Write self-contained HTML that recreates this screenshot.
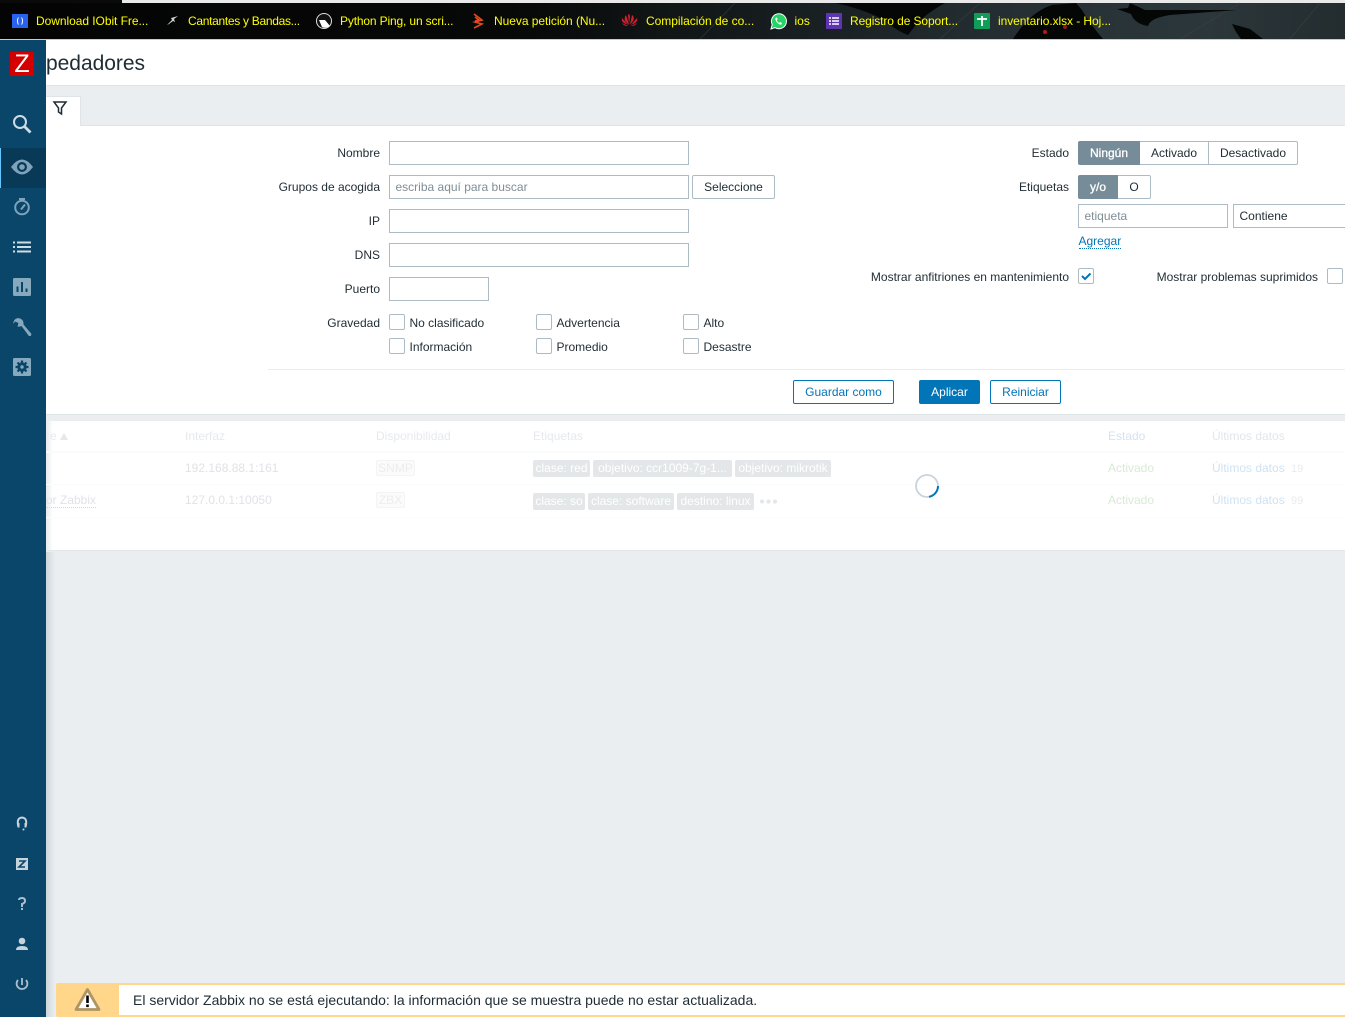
<!DOCTYPE html>
<html><head><meta charset="utf-8"><style>
html,body{margin:0;padding:0}
body{width:1345px;height:1017px;position:relative;overflow:hidden;background:#ebeef0;font:12px "Liberation Sans",sans-serif;color:#1f2c33}
.a{position:absolute;white-space:nowrap}
.bm{position:absolute;top:13px;line-height:16px;color:#ffff00;font-size:12px;white-space:nowrap}
.l{position:absolute;line-height:14px;text-align:right;white-space:nowrap}
.i{position:absolute;box-sizing:border-box;height:24px;background:#fff;border:1px solid #acbbc4;line-height:22px;padding-left:5.500px;white-space:nowrap}
.c{position:absolute;box-sizing:border-box;width:16px;height:16px;background:#fff;border:1px solid #acbbc4;border-radius:2px}
.t{position:absolute;line-height:14px;white-space:nowrap;margin-left:-.5px}
.b{position:absolute;box-sizing:border-box;height:24px;line-height:22px;text-align:center;border:1px solid #acbbc4;background:#fff;white-space:nowrap}
.s{position:absolute;box-sizing:border-box;height:24px;line-height:22px;text-align:center;border:1px solid #0275b8;border-radius:2px;background:#fff;color:#0275b8;white-space:nowrap}
.g{position:absolute;line-height:14px;white-space:nowrap}
.tag{position:absolute;height:17px;line-height:17px;background:#e3e7e9;color:#fff;border-radius:2px;text-align:center;white-space:nowrap}
svg{position:absolute;overflow:visible}
</style></head><body>

<!-- browser bar -->
<div class="a" style="left:0;top:0;width:1345px;height:3px;background:#e9e9e9"></div>
<div class="a" style="left:0;top:0;width:122px;height:3px;background:#0a0a0a"></div>
<div class="a" style="left:0;top:3px;width:1345px;height:36px;background:linear-gradient(90deg,#040404 0,#070808 38%,#111617 50%,#1a2124 62%,#263034 76%,#2c373b 90%,#232c2f 100%)"></div>
<svg style="left:0;top:0" width="1345" height="39">
<path d="M700 39 L735 3 M980 3 L940 39 M1180 39 L1240 3 M1290 39 L1320 3" stroke="#3a4549" stroke-width="1" opacity=".5"/>
<path d="M835 3 L945 3 Q925 14 915 26 L908 35 Q895 30 885 20 Q860 8 835 3Z" fill="#050606"/>
<path d="M1013 39 Q1030 12 1052 5 L1076 3 L1082 10 Q1090 24 1103 39Z" fill="#050606"/>
<path d="M1130 3 L1145 10 Q1175 10 1237 10 L1170 15 Q1150 18 1148 26 Q1135 24 1131 14 L1117 9 L1128 8Z" fill="#050606"/>
<path d="M1232 24 L1250 29 L1263 39 L1241 39 L1236 32Z" fill="#050606"/>
<circle cx="1045" cy="32" r="2" fill="#b81622"/><circle cx="1065" cy="27" r="2" fill="#8c1a20"/>
</svg>
<div class="a" style="left:0;top:39px;width:1345px;height:1px;background:#cfc9c9"></div>

<div class="a" style="left:12px;top:14px;width:16px;height:14px;background:#2962ef"></div>
<div class="a" style="left:17px;top:16px;width:6px;height:10px;border:1.500px solid #fff;border-radius:50%;box-sizing:border-box;border-top-color:transparent;border-bottom-color:transparent"></div>
<div class="bm" style="left:36px;letter-spacing:-.05px">Download IObit Fre...</div>
<svg style="left:166px;top:14px" width="13" height="13"><path d="M1 11 L6 6 L5 4 L12 2 L8 5 L9 8 L7 7 L3 10Z" fill="#cfcfcf"/></svg>
<div class="bm" style="left:188px;letter-spacing:-.3px">Cantantes y Bandas...</div>
<svg style="left:316px;top:13px" width="16" height="16"><circle cx="8" cy="8" r="7.500" fill="#111" stroke="#ddd"/><path d="M3 7 L9 7 L14 13 Q9 16 6 14Z" fill="#fff"/></svg>
<div class="bm" style="left:340px;letter-spacing:-.15px">Python Ping, un scri...</div>
<svg style="left:473px;top:13px" width="11" height="16"><path d="M1 1 L9 7 L2 9 L9 11 L1 15 M2 4 L6 7 L2 8" fill="none" stroke="#e6491f" stroke-width="1.600"/></svg>
<div class="bm" style="left:494px;letter-spacing:-.05px">Nueva petición (Nu...</div>
<svg style="left:621px;top:13px" width="17" height="16"><path d="M8 12 L5 2 Q3 4 4 8Z M8 12 L7 1 Q9 1 9 4Z M9 12 L11 2 Q14 4 12 8Z M7 12 L1 5 Q0 8 3 10Z M10 12 L16 5 Q17 8 14 10Z M7 13 L1 10 Q3 13 6 13Z M10 13 L16 10 Q14 13 11 13Z" fill="#d81e2c"/></svg>
<div class="bm" style="left:646px;letter-spacing:-.03px">Compilación de co...</div>
<svg style="left:770px;top:13px" width="16" height="17"><path d="M1 16 L2.200 11.500 A7.500 7.500 0 1 1 5 14.600Z" fill="#25d366" stroke="#fff"/><path d="M5.500 5 Q5 7 7 9.500 Q9 12 11.500 11.500 L12 10 L10 9 L9 10 Q7.500 9 6.800 7.200 L7.600 6.200 L7 4.500Z" fill="#fff"/></svg>
<div class="bm" style="left:794.500px">ios</div>
<div class="a" style="left:826px;top:13px;width:16px;height:16px;background:#5e35b1"></div>
<svg style="left:829px;top:17px" width="10" height="8"><path d="M0 1H2M3 1H10M0 4H2M3 4H10M0 7H2M3 7H10" stroke="#fff" stroke-width="1.500"/></svg>
<div class="bm" style="left:850px;letter-spacing:-.1px">Registro de Soport...</div>
<div class="a" style="left:974px;top:13px;width:16px;height:16px;background:#0f9d58;border-radius:1px"></div>
<svg style="left:977px;top:16px" width="10" height="10"><path d="M0 3H10M5 0V10" stroke="#fff" stroke-width="1.800"/></svg>
<div class="bm" style="left:998px;letter-spacing:-.07px">inventario.xlsx - Hoj...</div>

<!-- grey page shadow -->
<div class="a" style="left:46px;top:552px;width:9px;height:465px;background:linear-gradient(90deg,#cdd6da,rgba(235,238,240,0))"></div>

<!-- header -->
<div class="a" style="left:46px;top:40px;width:1299px;height:45px;background:#fff;border-bottom:1px solid #dfe4e7"></div>
<div class="a" style="left:46px;top:51px;font-size:21px;line-height:26px;letter-spacing:-.03px;color:#1f2c33">pedadores</div>

<!-- filter -->
<div class="a" style="left:46px;top:86px;width:1299px;height:39px;background:#ebeef0;border-bottom:1px solid #dfe4e7"></div>
<div class="a" style="left:46px;top:96px;width:34px;height:30px;background:#fff;border-right:1px solid #dfe4e7;border-top:1px solid #dfe4e7"></div>
<svg style="left:53px;top:101px" width="15" height="15"><path d="M1 1 H13 L8.500 7 V13 L5.500 11 V7Z" fill="none" stroke="#1f2c33" stroke-width="1.500"/></svg>
<div class="a" style="left:46px;top:126px;width:1299px;height:288px;background:#fff;border-bottom:1px solid #dfe4e7"></div>

<div class="l" style="right:965px;top:146px">Nombre</div>
<div class="i" style="left:389px;top:141px;width:300px"></div>
<div class="l" style="right:965px;top:180px">Grupos de acogida</div>
<div class="i" style="left:389px;top:175px;width:300px;color:#808d95">escriba aquí para buscar</div>
<div class="b" style="left:692px;top:175px;width:83px;border-radius:2px">Seleccione</div>
<div class="l" style="right:965px;top:214px">IP</div>
<div class="i" style="left:389px;top:209px;width:300px"></div>
<div class="l" style="right:965px;top:248px">DNS</div>
<div class="i" style="left:389px;top:243px;width:300px"></div>
<div class="l" style="right:965px;top:282px">Puerto</div>
<div class="i" style="left:389px;top:277px;width:100px"></div>
<div class="l" style="right:965px;top:316px">Gravedad</div>
<div class="c" style="left:389px;top:314px"></div><div class="t" style="left:410px;top:316px">No clasificado</div>
<div class="c" style="left:536px;top:314px"></div><div class="t" style="left:557px;top:316px">Advertencia</div>
<div class="c" style="left:683px;top:314px"></div><div class="t" style="left:704px;top:316px">Alto</div>
<div class="c" style="left:389px;top:338px"></div><div class="t" style="left:410px;top:340px">Información</div>
<div class="c" style="left:536px;top:338px"></div><div class="t" style="left:557px;top:340px">Promedio</div>
<div class="c" style="left:683px;top:338px"></div><div class="t" style="left:704px;top:340px">Desastre</div>

<div class="l" style="right:276px;top:146px">Estado</div>
<div class="b" style="left:1078px;top:141px;width:62px;background:#768d99;border-color:#768d99;color:#fff;border-radius:2px 0 0 2px;-webkit-text-stroke:.3px #fff">Ningún</div>
<div class="b" style="left:1140px;top:141px;width:69px;border-left:0">Activado</div>
<div class="b" style="left:1208px;top:141px;width:90px;border-radius:0 2px 2px 0">Desactivado</div>
<div class="l" style="right:276px;top:180px">Etiquetas</div>
<div class="b" style="left:1078px;top:175px;width:40px;background:#768d99;border-color:#768d99;color:#fff;border-radius:2px 0 0 2px;-webkit-text-stroke:.3px #fff">y/o</div>
<div class="b" style="left:1118px;top:175px;width:33px;border-left:0;border-radius:0 2px 2px 0">O</div>
<div class="i" style="left:1078px;top:204px;width:150px;color:#808d95">etiqueta</div>
<div class="i" style="left:1233px;top:204px;width:130px">Contiene</div>
<div class="t" style="left:1079px;top:234px;color:#0275b8;border-bottom:1px dotted #0275b8">Agregar</div>
<div class="l" style="right:276px;top:270px">Mostrar anfitriones en mantenimiento</div>
<div class="c" style="left:1078px;top:268px"></div>
<svg style="left:1081px;top:272px" width="11" height="9"><path d="M1 4 L4 7 L9.500 1.500" fill="none" stroke="#0275b8" stroke-width="2"/></svg>
<div class="l" style="right:27px;top:270px">Mostrar problemas suprimidos</div>
<div class="c" style="left:1327px;top:268px"></div>

<div class="a" style="left:268px;top:369px;width:1077px;height:1px;background:#ebeef0"></div>
<div class="s" style="left:793px;top:380px;width:101px">Guardar como</div>
<div class="s" style="left:919px;top:380px;width:61px;background:#0275b8;color:#fff">Aplicar</div>
<div class="s" style="left:990px;top:380px;width:71px">Reiniciar</div>

<!-- table -->
<div class="a" style="left:46px;top:421px;width:1299px;height:130px;background:#fff;border-bottom:1px solid #e3e7e9;box-sizing:border-box"></div>
<div class="a" style="left:46px;top:421px;width:7px;height:129px;background:linear-gradient(90deg,#e6ebed,rgba(255,255,255,0))"></div>
<div class="a" style="left:46px;top:451px;width:1299px;height:2px;background:#fafbfb"></div>
<div class="a" style="left:46px;top:484px;width:1299px;height:1px;background:#fbfcfc"></div>
<div class="a" style="left:46px;top:517px;width:1299px;height:1px;background:#fbfcfc"></div>

<div class="g" style="left:46px;top:429px;color:#e6ecf1">re</div>
<svg style="left:60px;top:433px" width="8" height="7"><path d="M0 7 L4 0 L8 7Z" fill="#e5e7e9"/></svg>
<div class="g" style="left:185px;top:429px;color:#e6e9ee">Interfaz</div>
<div class="g" style="left:376px;top:429px;color:#e6e9ee">Disponibilidad</div>
<div class="g" style="left:533px;top:429px;color:#e6e9ee">Etiquetas</div>
<div class="g" style="left:1108px;top:429px;color:#d6e2f0">Estado</div>
<div class="g" style="left:1212px;top:429px;color:#e1e6ed">Últimos datos</div>

<div class="g" style="left:185px;top:461px;color:#e3e1e6">192.168.88.1:161</div>
<div class="a" style="left:376px;top:460px;width:39px;height:16px;box-sizing:border-box;border:1px solid #f3f4f4;border-radius:2px;background:#fbfbfb;color:#ebedee;text-align:center;line-height:14px">SNMP</div>
<div class="tag" style="left:533px;top:460px;width:57px">clase: red</div>
<div class="tag" style="left:593px;top:460px;width:139px">objetivo: ccr1009-7g-1...</div>
<div class="tag" style="left:735px;top:460px;width:96px">objetivo: mikrotik</div>
<div class="g" style="left:1108px;top:461px;color:#d8ebd5">Activado</div>
<div class="g" style="left:1212px;top:461px;color:#d0e2f2">Últimos datos</div>
<div class="g" style="left:1291px;top:462px;font-size:11px;color:#e8ebee">19</div>

<div class="g" style="left:46px;top:493px;color:#e3e1e6;border-bottom:1px dotted #d5d5d8">or Zabbix</div>
<div class="g" style="left:185px;top:493px;color:#e3e1e6">127.0.0.1:10050</div>
<div class="a" style="left:376px;top:492px;width:29px;height:16px;box-sizing:border-box;border:1px solid #f3f4f4;border-radius:2px;background:#fbfbfb;color:#ebedee;text-align:center;line-height:14px">ZBX</div>
<div class="tag" style="left:533px;top:493px;width:52px">clase: so</div>
<div class="tag" style="left:588px;top:493px;width:86px">clase: software</div>
<div class="tag" style="left:677px;top:493px;width:77px">destino: linux</div>
<svg style="left:760px;top:499px" width="17" height="5"><g fill="#e3e7e9"><circle cx="2" cy="2.500" r="2"/><circle cx="8.500" cy="2.500" r="2"/><circle cx="15" cy="2.500" r="2"/></g></svg>
<div class="g" style="left:1108px;top:493px;color:#d8ebd5">Activado</div>
<div class="g" style="left:1212px;top:493px;color:#d0e2f2">Últimos datos</div>
<div class="g" style="left:1291px;top:494px;font-size:11px;color:#e8ebee">99</div>

<svg style="left:915px;top:474px" width="24" height="24"><circle cx="12" cy="12" r="11" fill="none" stroke="#c9d3da" stroke-width="1.800"/><path d="M23 12 A11 11 0 0 1 14 22.800" fill="none" stroke="#0275b8" stroke-width="2"/></svg>

<!-- sidebar -->
<div class="a" style="left:0;top:40px;width:46px;height:977px;background:#0a466a"></div>
<div class="a" style="left:0;top:148px;width:46px;height:40px;background:#083a58"></div>
<div class="a" style="left:0;top:148px;width:1px;height:40px;background:#64c5ff"></div>
<div class="a" style="left:10px;top:52px;width:24px;height:24px;background:#d40000"></div>
<div class="a" style="left:10px;top:52px;width:24px;height:24px;color:#fff;font-size:25px;line-height:24px;text-align:center">Z</div>

<svg style="left:0;top:40px" width="46" height="977">
<g fill="none" stroke="#cfdce4"><circle cx="20" cy="82" r="6" stroke-width="2"/><path d="M24.500 86.500 L30.500 92.500" stroke-width="2.800"/></g>
<path d="M11 127 Q22 112 33 127 Q22 142 11 127Z" fill="#7ea3ba"/><circle cx="22" cy="127" r="5" fill="#083a58"/><circle cx="22" cy="127" r="2.800" fill="#7ea3ba"/>
<g fill="none" stroke="#7ea3ba" stroke-width="2"><circle cx="22" cy="167.500" r="6.800"/><path d="M19 159 H25" /><path d="M21 169.500 L25 164.500"/></g>
<path d="M13 202.500 H15 M17 202.500 H31 M13 207 H15 M17 207 H31 M13 211.500 H15 M17 211.500 H31" stroke="#cfdce4" stroke-width="2" fill="none"/>
<rect x="13" y="238" width="18" height="18" rx="1.500" fill="#86a9be"/><path d="M17.500 252 V246.500 M22 252 V242 M26.500 252 V248.500" stroke="#0a466a" stroke-width="2"/>
<path d="M18 278 Q13 279 13.500 284 L15 281.500 L18.500 283 L17.500 286.500 Q20 287 21.500 286 L28.500 295.500 Q30 296.800 31 295.500 L31.500 294 L23.500 284.500 Q24 279 18 278Z" fill="#86a9be"/>
<rect x="13" y="318" width="18" height="18" rx="1.500" fill="#86a9be"/><circle cx="22" cy="327" r="3.200" fill="none" stroke="#0a466a" stroke-width="3"/><path d="M22 320.500V323M22 331V333.500M15.500 327H18M26 327H28.500M17.500 322.500L19 324M25 330L26.500 331.500M26.500 322.500L25 324M19 330L17.500 331.500" stroke="#0a466a" stroke-width="2.200"/>

<path d="M18.500 787 Q16 778 22 777.500 Q28 778 25.500 787" fill="none" stroke="#c5d3dc" stroke-width="2"/>
<path d="M17.500 783 h2 v4.500 h-2z M24.500 783 h2 v4.500 h-2z" fill="#c5d3dc"/><circle cx="23.500" cy="789.500" r="1" fill="#c5d3dc"/>
<rect x="16" y="818" width="12" height="12" fill="#c5d3dc"/><path d="M19 821 H25 L19 827 H25" stroke="#0a466a" stroke-width="1.600" fill="none"/>
<path d="M19 860 Q19 858 22 858 Q25 858 25 861 Q25 863 22 864 V867" fill="none" stroke="#a9bfcd" stroke-width="2"/><rect x="21" y="868" width="2" height="2" fill="#a9bfcd"/>
<circle cx="22" cy="901" r="3.300" fill="#c5d3dc"/><path d="M16 910 Q16 906 22 906 Q28 906 28 910Z" fill="#c5d3dc"/>
<path d="M18 940 A5.400 5.400 0 1 0 26 940 M22 938 V945" fill="none" stroke="#a9bfcd" stroke-width="1.800"/>
</svg>

<!-- warning -->
<div class="a" style="left:56px;top:983px;width:1289px;height:34px;background:#ffd68a;border-radius:2px 0 0 2px"></div>
<div class="a" style="left:119px;top:985px;width:1226px;height:30px;background:#fff;font-size:14px;line-height:30px;padding-left:14px;box-sizing:border-box;color:#1f2c33">El servidor Zabbix no se está ejecutando: la información que se muestra puede no estar actualizada.</div>
<svg style="left:74px;top:987px" width="27" height="25"><path d="M13.500 2.500 L25 22.500 H2Z" fill="#fff" stroke="#ae9565" stroke-width="2.800" stroke-linejoin="round"/><path d="M13.500 8.500 V16" stroke="#000" stroke-width="2.600"/><rect x="12.200" y="17.500" width="2.600" height="2.600" fill="#000"/></svg>
</body></html>
